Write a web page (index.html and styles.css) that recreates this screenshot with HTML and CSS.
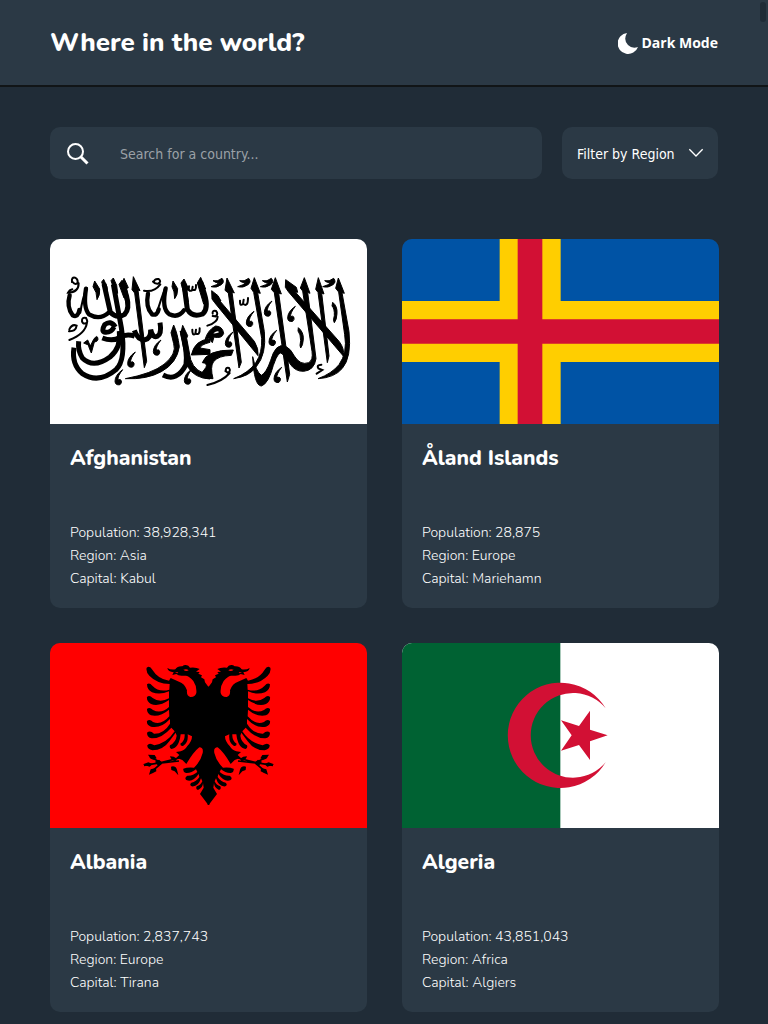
FILE: index.html
```html
<!DOCTYPE html>
<html lang="en">
<head>
<meta charset="utf-8">
<meta name="viewport" content="width=device-width, initial-scale=1">
<title>Where in the world?</title>
<link rel="stylesheet" href="styles.css">
</head>
<body>
<header class="header">
  <h1 class="header-title">Where in the world?</h1>
  <button class="theme-toggle" type="button">
    <svg class="moon" viewBox="0 0 20 21" aria-hidden="true"><path d="M9 0A10.500 10.500 0 1 0 20 14Q14 16 10 12Q5 7 9 0Z"/></svg>
    Dark Mode
  </button>
</header>
<main class="content">
  <form class="filters">
    <div class="search">
      <svg class="search-icon" viewBox="0 0 22 22" aria-hidden="true"><circle cx="8.500" cy="8.500" r="7.500"/><path d="M14 14l6.500 6.500"/></svg>
      <input class="search-input" type="text" placeholder="Search for a country..." aria-label="Search for a country">
    </div>
    <div class="region">
      <select class="region-select" aria-label="Filter by Region">
        <option>Filter by Region</option><option>Africa</option><option>Americas</option><option>Asia</option><option>Europe</option><option>Oceania</option>
      </select>
      <svg class="chevron" viewBox="0 0 48 30" aria-hidden="true"><path d="M4 4l20 20 20-20"/></svg>
    </div>
  </form>
  <section class="cards">
    <article class="card">
      <svg class="flag" viewBox="0 0 951 555" preserveAspectRatio="none" role="img" aria-label="Flag of Afghanistan">
        <path fill="#fff" d="M0 0h951v555H0z"/>
        <defs>
          <path id="mark" d="M24 0Q1 16 1 35Q2 48 16 45Q22 40 20 33Q17 27 10 31Q8 20 24 0Z"/>
          <path id="tick" d="M0 5Q14 9 27 -2Q36 9 25 17Q10 28 -6 23Q14 18 18 10Q8 13 0 5Z"/>
        </defs>
        <g transform="translate(0 63)">
          <g class="pen pen-thin">
            <path d="M66 66Q64 51 75 53Q86 59 82 70Q74 75 68 66M86 70Q86 98 54 98Q58 90 67 88"/>
            <path d="M311 66Q314 55 326 57Q336 65 324 71Q314 72 309 65M331 73Q312 98 282 92"/>
            <path d="M417 79Q414 97 426 91L428 80M427 88Q439 96 438 75M427 209Q426 228 436 222L438 209M437 220Q450 228 449 205"/>
            <path d="M58 208Q66 191 80 197Q77 215 57 214M96 184Q95 171 108 174Q116 188 107 190Q97 193 96 182M111 188Q106 222 58 240"/>
            <path d="M110 84Q97 116 91 158M344 88Q333 118 322 153"/>
          </g>
          <g class="pen pen-medium">
            <path d="M59 106Q49 140 68 166Q84 174 88 150"/>
            <path d="M108 86Q99 143 117 163Q149 182 176 158"/>
            <path d="M294 101Q286 142 306 163Q322 168 326 148"/>
            <path d="M347 85Q334 146 358 163Q385 175 402 151"/>
          </g>
          <g class="pen pen-broad">
            <path d="M162 72L181 157Q200 177 224 163Q240 146 230 110L220 74"/>
            <path d="M402 73L412 148Q427 174 458 162Q477 145 463 101L452 66"/>
            <path d="M190 73L214 203Q229 300 198 329Q146 373 97 341Q64 313 72 263"/>
            <path d="M208 213Q214 263 180 291Q130 327 97 294Q83 272 86 244"/>
            <path d="M196 201Q182 179 164 194Q152 214 166 217Q184 218 192 201M157 234Q188 246 210 232Q228 220 254 228"/>
            <path d="M253 211Q263 240 285 239Q303 236 302 209Q308 236 322 229Q336 222 330 188"/>
            <path d="M396 211Q413 275 408 314Q381 367 339 345"/>
          </g>
          <g class="nib">
            <path d="M134 63l15 24q2 18-8 32q0-24-12-39zM369 63l14 23q0 20-9 30q0-23-8-36z"/>
            <path d="M155 66l6-8 10 22 2 20-8-5zM183 62l7-8 10 22 3 24-8-4zM207 73l9-12 15 33-10-2 8 18-7 4zM215 70l7-15 13 28-6 3 9 40-9 10z"/>
            <path d="M250 50l20 42-6-2 26 214-7 19L254 99l-8-10zM393 69l9-12 16 34-8-1 5 36-9-9zM442 69l10-17 15 35-6-2 10 38-10 9z"/>
            <path d="M363 218l8-23q12 26 17 65q-7 49-54 75q-43 24-108 21q80-15 116-43q39-31 29-62zM392 222l6-26 15 31-3 8 12 64q13 39 58 45v13q-47-2-68-38zM424 285Q434 239 480 237v10Q452 254 450 264L480 269v14z"/>
            <path d="M101 249l12-9 8 18 10-20q12-17 13 0q-2 8-11 8l-9 33q-8-18-9-24z"/>
            <use href="#mark" x="309" y="240"/><use href="#mark" x="232" y="276"/><use href="#mark" x="194" y="329"/><use href="#mark" x="402" y="327"/>
          </g>
        </g>
        <g transform="translate(465 63)">
          <g class="nib">
            <path d="M66 54L88 99l-7-3 28 211-7 17L70 99l-10-8zM20 92l19 15 9 16-4-1 104 122q14 23 11 43L29 128l-8-11zM148 53l18 47-8-2 20 117q7 68-24 105q-20 29-68 36q46-18 67-49q19-28 17-72L146 97l-8-12z"/>
            <path d="M211 53l18 49-8-3 33 244-7 23L208 98l-9-10zM242 59l32 23 4 15-7-1 132 149q16 22 12 43L250 95l-9-13zM298 53l17 47-7-3 25 199q-5 35-37 38q-26 1-42-24q-13-18-21-27q-11-17-28 33q-15 56-36 62q-22-1-26-88q10 45 26 56q15-7 28-45q15-54 45-42q15 7 26 29q18 29 43 20q14-8 10-34L293 93l-7-9z"/>
            <path d="M340 53l17 49-7-3 22 189-5 20-28-211-7-9zM400 54l18 46-7-2 21 117q8 77-20 110q-23 28-73 31q41-15 63-42q26-36 17-90L401 96l-9-11z"/>
            <path d="M383 127q15 12 13 34q-1 19-8 27q-5-6 0-21q1-21-7-29zM280 203q16 13 15 34q-1 20-8 27q-4-5 0-22q0-20-8-29z"/>
            <path d="M-8 308Q5 269 85 270l-6 16Q39 287 25 306Q15 321 24 356Q3 359-20 345Q-5 337 3 322Q8 309-8 308ZM0 239Q8 210 32 198Q53 199 56 220Q51 237 27 231L22 248l-8-12Q12 232 0 239Z"/>
            <use href="#tick" x="24" y="57"/><use href="#tick" x="104" y="57"/><use href="#tick" x="172" y="57"/><use href="#tick" x="359" y="57"/>
            <use href="#mark" x="123" y="154"/><use href="#mark" x="177" y="123"/><use href="#mark" x="247" y="139"/><use href="#mark" x="191" y="211"/><use href="#mark" x="60" y="216"/><use href="#mark" x="206" y="322"/>
          </g>
          <path fill="#fff" d="M25 220q10 1 17-3q-3-8-17 3z"/>
          <g class="pen pen-thin"><path d="M23 161Q21 150 33 153Q41 161 32 169L23 168M38 170Q38 187 7 197M63 334Q60 321 72 324Q79 333 68 338L61 333M74 339Q52 365 7 375"/><path d="M105 122Q104 140 114 132L116 119M115 132Q129 142 129 114M349 314Q334 315 340 325L352 330L335 341"/></g>
        </g>
      </svg>
      <div class="card-body">
        <h2 class="country">Afghanistan</h2>
        <p>Population: 38,928,341</p><p>Region: Asia</p><p>Capital: Kabul</p>
      </div>
    </article>
    <article class="card">
      <svg class="flag" viewBox="0 0 951 555" preserveAspectRatio="none" role="img" aria-label="Flag of the Åland Islands">
        <path fill="#0053a5" d="M0 0h951v555H0z"/>
        <path fill="#ffce00" d="M293 0h183v186h475v183H476v186H293V369H0V186h293z"/>
        <path fill="#d21034" d="M347 0h74v241h530v73H421v241h-74V314H0v-73h347z"/>
      </svg>
      <div class="card-body">
        <h2 class="country">Åland Islands</h2>
        <p>Population: 28,875</p><p>Region: Europe</p><p>Capital: Mariehamn</p>
      </div>
    </article>
    <article class="card">
      <svg class="flag" viewBox="0 0 951 555" preserveAspectRatio="none" role="img" aria-label="Flag of Albania">
        <path fill="#f00" d="M0 0h951v555H0z"/>
        <defs>
          <g id="eagle-half">
            <path d="M223 110L220 110L210 97L208 88L198 82L201 76L190 71L194 66L183 65L194 57Q183 51 165 53L160 47Q149 42 142 49Q127 48 121 58Q107 60 97 54Q99 65 116 67L112 75L124 72Q130 78 143 77L153 77Q164 79 175 93Q186 109 184 129Q180 142 166 141Q154 138 156 121Q149 100 132 95L107 84L102 92Q69 87 52 59Q44 45 35 53Q32 65 43 77Q66 101 104 102L103 119Q72 128 52 107Q43 96 36 103Q36 119 51 127Q75 136 102 124L102 145Q75 160 53 144Q43 133 36 141Q34 154 48 162Q72 171 102 150L102 171Q78 193 54 180Q43 169 36 177Q35 190 48 196Q75 202 102 179L103 199Q80 226 54 216Q44 205 36 213Q34 225 48 230Q77 237 105 207L105 221Q86 252 57 251Q45 239 36 248Q36 262 50 265Q80 266 109 233L119 244Q96 279 58 286Q43 276 37 286Q36 297 52 301Q84 301 103 274L122 248L125 257Q123 276 105 286Q102 293 109 297Q132 295 137 253L149 253Q150 272 136 281Q136 289 144 288Q161 277 158 253L171 259Q171 274 157 288Q149 301 137 304L123 306L133 315L124 323L142 330L154 342Q175 306 193 292Q206 292 203 309Q197 334 177 353Q158 351 145 356Q143 366 153 369Q169 370 183 358L187 366Q174 378 157 377Q147 383 154 390Q173 398 191 372L193 381Q184 395 169 398Q162 404 170 409Q190 411 198 385L202 394Q197 406 185 409Q181 418 189 420Q204 412 204 399L206 413L195 432L220 465H223Z"/>
            <path fill="none" stroke="#000" stroke-width="5" d="M132 324L78 338L27 346M132 333L80 339L45 320M80 339L47 367"/>
            <path d="M39 314l20 1 6 10-10 4-8-3zM24 343l16-6 13 5-9 8-9-3zM42 374l5-16 16-4 1 10-10 5zM60 335l12-6 9 8-12 10zM108 350q13-4 18 9l4 17-11-12-10-4zM105 319q12 0 21 7l-4 8q-13-1-17-15z"/>
            <path fill="#f00" d="M145 59q10-4 16 2q-8 5-16-2zM120 66l10 1-3 3z"/>
          </g>
        </defs>
        <g transform="translate(255 21)"><use href="#eagle-half"/><use href="#eagle-half" transform="translate(441 0) scale(-1 1)"/></g>
      </svg>
      <div class="card-body">
        <h2 class="country">Albania</h2>
        <p>Population: 2,837,743</p><p>Region: Europe</p><p>Capital: Tirana</p>
      </div>
    </article>
    <article class="card">
      <svg class="flag" viewBox="0 0 951 555" preserveAspectRatio="none" role="img" aria-label="Flag of Algeria">
        <path fill="#fff" d="M0 0h951v555H0z"/><path fill="#006233" d="M0 0h475v555H0z"/>
        <path fill="#d21034" d="M611 196A158 158 0 1 0 611 358A127 127 0 1 1 611 196ZM617 277L564 260V203L531 249L477 232L509 277L477 323L531 306L564 351V295Z"/>
      </svg>
      <div class="card-body">
        <h2 class="country">Algeria</h2>
        <p>Population: 43,851,043</p><p>Region: Africa</p><p>Capital: Algiers</p>
      </div>
    </article>
  </section>
</main>
<div class="scroll-thumb" aria-hidden="true"></div>
</body>
</html>
```
FILE: styles.css
```css
* { box-sizing: border-box; }
body {
  margin: 0;
  background: #202c37;
  color: #fff;
  font-family: Nunito, Lato, sans-serif;
}
.header {
  display: flex;
  align-items: center;
  justify-content: space-between;
  padding: 25px 50px 24px;
  background: #2b3945;
  border-bottom: 2px solid #111517;
}
.header-title {
  margin: 0;
  font: 800 26px/36px Nunito, "Open Sans", sans-serif;
}
.theme-toggle {
  display: flex;
  align-items: center;
  gap: 4px;
  padding: 0;
  border: 0;
  background: none;
  color: #fff;
  font: 700 14px/20px Tahoma, "Open Sans", sans-serif;
}
.moon { width: 20px; height: 21px; fill: #fff; }
.content { padding: 40px 49px 12px 50px; }
.filters { display: flex; gap: 20px; margin: 0 1px 60px 0; }
.search {
  display: flex;
  flex: 1;
  align-items: center;
  gap: 31px;
  height: 52px;
  padding: 2px 16px 0 17px;
  border-radius: 10px;
  background: #2b3945;
}
.search-icon { flex: none; width: 22px; height: 22px; fill: none; stroke: #fff; stroke-width: 2; }
.search-icon path { stroke-width: 3; }
.search-input {
  flex: 1;
  min-width: 0;
  padding: 0;
  border: 0;
  outline: 0;
  background: none;
  color: #fff;
  font: 14px/20px Tahoma, "DejaVu Sans Condensed", sans-serif;
}
.search-input::placeholder { color: #9ba1a7; opacity: 1; }
.region { position: relative; width: 156px; }
.region-select {
  width: 100%;
  height: 52px;
  padding: 2px 40px 0 15px;
  appearance: none;
  border: 0;
  border-radius: 10px;
  background: #2b3945;
  color: #fff;
  font: 14px/20px Tahoma, "DejaVu Sans Condensed", sans-serif;
}
.chevron {
  position: absolute;
  top: 21px;
  right: 14px;
  width: 16px;
  height: 10px;
  fill: none;
  stroke: #fff;
  stroke-width: 4;
  pointer-events: none;
}
.cards { display: grid; grid-template-columns: repeat(2, 1fr); gap: 35px; }
.card { overflow: hidden; border-radius: 10px; background: #2b3945; }
.flag { display: block; width: 100%; height: 185px; }
.card-body { padding: 18px 20px; }
.country {
  margin: 0 0 47px;
  font: 800 21px/32px Nunito, "Open Sans", sans-serif;
}
.card-body p { margin: 0; font-size: 14px; font-weight: 300; line-height: 23px; }
.pen { fill: none; stroke: #000; stroke-linecap: round; }
.pen-thin { stroke-width: 6; }
.pen-medium { stroke-width: 13; }
.pen-broad { stroke-width: 15; stroke-linecap: butt; }
.nib { stroke: #000; stroke-width: 3; }
.scroll-thumb {
  position: fixed;
  top: 2px;
  right: 2px;
  width: 6px;
  height: 20px;
  border-radius: 3px;
  background: #202c37;
}
```
